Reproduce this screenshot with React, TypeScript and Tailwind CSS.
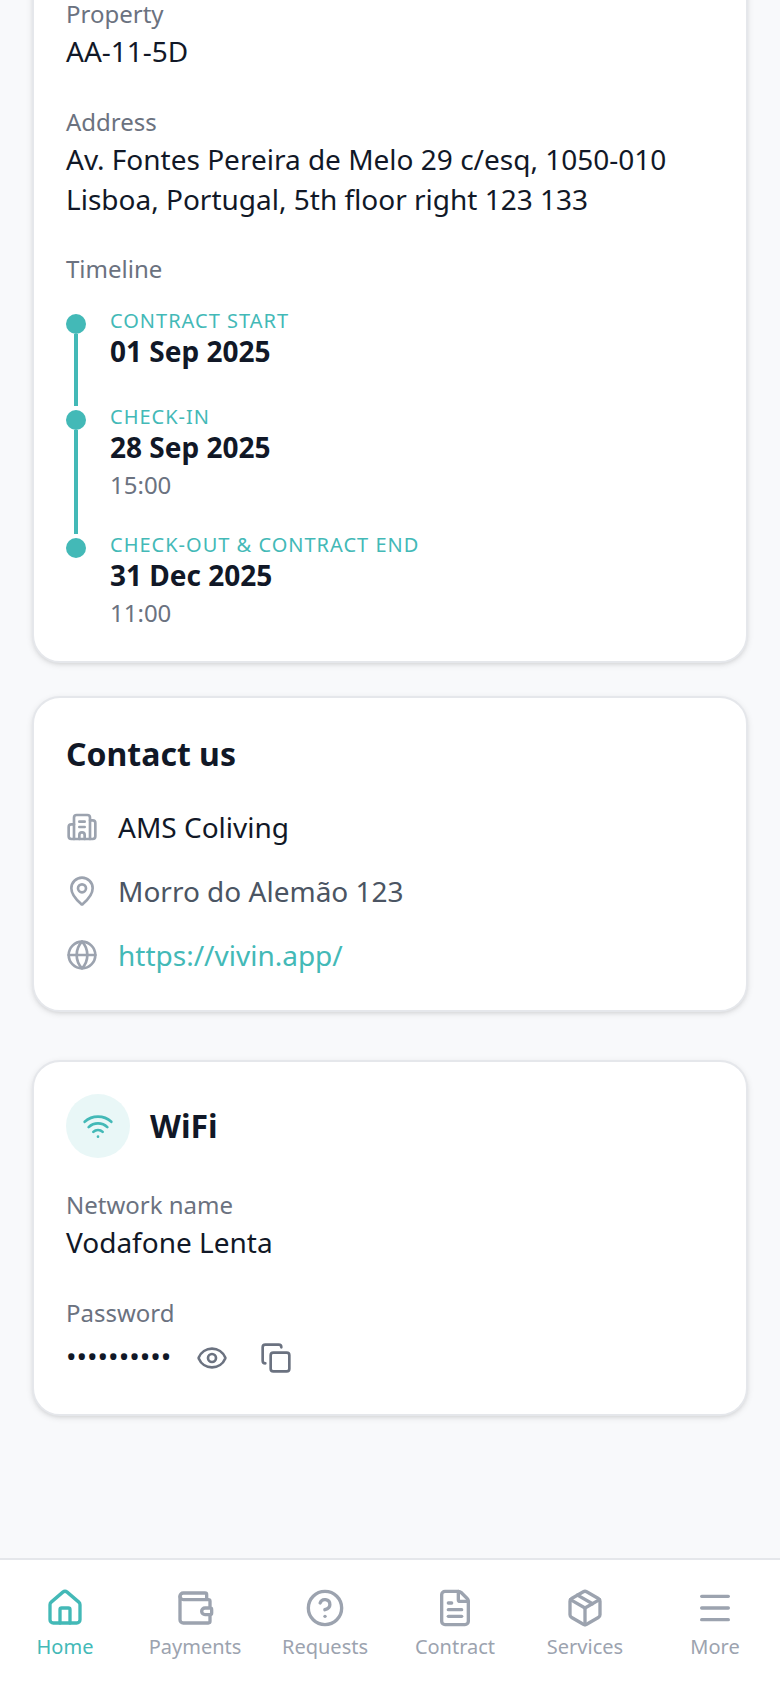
import React from "react";
import { Building2, Copy, Eye, FileText, Globe, House, CircleHelp, MapPin, Menu, Package, Wallet, Wifi } from "lucide-react";

const navItems = [
  { label: "Home", icon: House, active: true },
  { label: "Payments", icon: Wallet },
  { label: "Requests", icon: CircleHelp },
  { label: "Contract", icon: FileText },
  { label: "Services", icon: Package },
  { label: "More", icon: Menu },
];

const timeline = [
  { label: "CONTRACT START", date: "01 Sep 2025" },
  { label: "CHECK-IN", date: "28 Sep 2025", time: "15:00" },
  { label: "CHECK-OUT & CONTRACT END", date: "31 Dec 2025", time: "11:00" },
];

function Label({ children, className = "" }: { children: React.ReactNode; className?: string }) {
  return <div className={`text-[24px] leading-[28px] text-[#6b7280] ${className}`}>{children}</div>;
}

function Value({ children }: { children: React.ReactNode }) {
  return <div className="mt-[3px] text-[28px] leading-[40px] text-[#111827]">{children}</div>;
}

function Timeline() {
  return (
    <div className="mt-[23.5px]">
      {timeline.map((item, i) => {
        const last = i === timeline.length - 1;
        return (
          <div key={item.label} className="flex gap-[24px]">
            <div className="flex w-[20px] shrink-0 flex-col items-center pt-[7.5px]">
              <div className="h-[20px] w-[20px] shrink-0 rounded-full bg-[#43b9b7]" />
              {!last && <div className="mb-[-3px] w-[4px] flex-1 bg-[#43b9b7]" />}
            </div>
            <div className={last ? "" : item.time ? "pb-[33px]" : "pb-[33.5px]"}>
              <div className="text-[20px] leading-[28px] tracking-[1px] text-[#43b9b7]">{item.label}</div>
              <div className="mt-[-1.5px] text-[28px] font-bold leading-[36px] text-[#111827]">{item.date}</div>
              {item.time && <div className="mt-[6.5px] text-[24px] leading-[26px] text-[#6b7280]">{item.time}</div>}
            </div>
          </div>
        );
      })}
    </div>
  );
}

function Card({ children, className = "" }: { children: React.ReactNode; className?: string }) {
  return (
    <section
      className={`rounded-[28px] border-2 border-[#e5e7eb] bg-white px-[32px] shadow-[0_2px_6px_rgba(0,0,0,0.1),0_2px_4px_-2px_rgba(0,0,0,0.1)] ${className}`}
    >
      {children}
    </section>
  );
}

function ContactRow({ icon: Icon, className, children }: { icon: React.ElementType; className: string; children: React.ReactNode }) {
  return (
    <div className="flex items-center gap-[20px]">
      <Icon size={32} className="shrink-0 text-[#9ca3af]" />
      <span className={`text-[28px] leading-[40px] ${className}`}>{children}</span>
    </div>
  );
}

export default function App() {
  return (
    <div className="flex h-[1688px] w-[780px] flex-col overflow-hidden bg-[#f8f9fb] font-['Noto_Sans',sans-serif]">
      <main className="min-h-0 flex-1 px-[32px]">
        <Card className="mt-[-34px] pb-[35px] pt-[32px]">
          <Label>Property</Label>
          <Value>AA-11-5D</Value>
          <Label className="mt-[37px]">Address</Label>
          <Value>Av. Fontes Pereira de Melo 29 c/esq, 1050-010 Lisboa, Portugal, 5th floor right 123 133</Value>
          <Label className="mt-[36px]">Timeline</Label>
          <Timeline />
        </Card>

        <Card className="mt-[33px] pb-[35px] pt-[33px]">
          <h2 className="text-[32px] font-bold leading-[46px] text-[#111827]">Contact us</h2>
          <div className="mt-[30px] flex flex-col gap-[24px]">
            <ContactRow icon={Building2} className="text-[#111827]">AMS Coliving</ContactRow>
            <ContactRow icon={MapPin} className="text-[#4b5563]">Morro do Alemão 123</ContactRow>
            <ContactRow icon={Globe} className="text-[#43b9b7]">https://vivin.app/</ContactRow>
          </div>
        </Card>

        <Card className="mt-[48px] pb-[36px] pt-[32px]">
          <div className="flex items-center gap-[20px]">
            <div className="flex h-[64px] w-[64px] items-center justify-center rounded-full bg-[#e9f7f7]">
              <Wifi size={32} className="text-[#43b9b7]" />
            </div>
            <h2 className="text-[32px] font-bold leading-[46px] text-[#111827]">WiFi</h2>
          </div>
          <Label className="mt-[33.5px]">Network name</Label>
          <Value>Vodafone Lenta</Value>
          <Label className="mt-[36.5px]">Password</Label>
          <div className="mt-[11px] flex h-[40px] items-center">
            <span className="mb-[4px] mr-[24px] w-[106px] text-[28px] leading-[40px] text-[#111827]">••••••••••</span>
            <Eye size={32} className="mr-[32px] text-[#6b7280]" />
            <Copy size={32} className="text-[#6b7280]" />
          </div>
        </Card>
      </main>

      <nav className="grid h-[130px] shrink-0 grid-cols-6 border-t-2 border-[#e5e7eb] bg-white pt-[28px]">
        {navItems.map((item) => (
          <div key={item.label} className={`flex flex-col items-center ${item.active ? "text-[#43b9b7]" : "text-[#9ca3af]"}`}>
            <item.icon size={40} />
            <span className="mt-[5px] text-[20px] leading-[28px]">{item.label}</span>
          </div>
        ))}
      </nav>
    </div>
  );
}
